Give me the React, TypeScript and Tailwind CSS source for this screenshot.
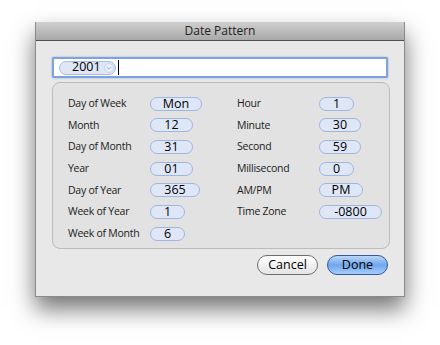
import React from 'react';

const leftRows = [
  { label: 'Day of Week', value: 'Mon', w: 'w-[52px]' },
  { label: 'Month', value: '12', w: 'w-[43px]' },
  { label: 'Day of Month', value: '31', w: 'w-[43px]' },
  { label: 'Year', value: '01', w: 'w-[43px]' },
  { label: 'Day of Year', value: '365', w: 'w-[50px]' },
  { label: 'Week of Year', value: '1', w: 'w-[35px]' },
  { label: 'Week of Month', value: '6', w: 'w-[35px]' },
];

const rightRows = [
  { label: 'Hour', value: '1', w: 'w-[35px]' },
  { label: 'Minute', value: '30', w: 'w-[42px]' },
  { label: 'Second', value: '59', w: 'w-[42px]' },
  { label: 'Millisecond', value: '0', w: 'w-[35px]' },
  { label: 'AM/PM', value: 'PM', w: 'w-[44px]' },
  { label: 'Time Zone', value: '-0800', w: 'w-[63px]' },
];

const Token: React.FC<{ value: string; w: string }> = ({ value, w }) => (
  <div
    className={`${w} h-[14px] rounded-full border border-[#9fb6e2] bg-[#dfe7f7] flex items-center justify-center text-[12.5px] leading-none text-black`}
  >
    {value}
  </div>
);

const Column: React.FC<{ rows: { label: string; value: string; w: string }[] }> = ({ rows }) => (
  <div className="flex flex-col">
    {rows.map((r) => (
      <div key={r.label} className="h-[21.67px] flex items-center">
        <span className="w-[82px] whitespace-nowrap text-[10.5px] tracking-[-0.25px] font-medium text-[#1a1a1a]">
          {r.label}
        </span>
        <Token value={r.value} w={r.w} />
      </div>
    ))}
  </div>
);

const App: React.FC = () => {
  return (
    <div
      className="w-[440px] h-[345px] bg-white pt-[22px] pl-[35px]"
      style={{ fontFamily: '"Lucida Grande", "Open Sans", sans-serif' }}
    >
      <div className="w-[370px] h-[275px] bg-[#e8e8e8] border border-[#8a8a8a] border-t-0 shadow-[0_12px_22px_rgba(0,0,0,0.55)] flex flex-col">
        <div className="h-[19px] bg-gradient-to-b from-[#d0d0d0] to-[#a8a8a8] border-b border-[#505050] flex items-center justify-center text-[12px] font-medium text-[#222]">
          Date Pattern
        </div>

        <div className="pl-[16px] pt-[16px]">
          <div className="w-[336px] h-[21px] rounded-[2px] border-[2px] border-[#7da2dc] shadow-[0_0_2px_#7da2dc] bg-white flex items-center pl-[5px]">
            <div className="h-[14px] w-[57px] rounded-full border border-[#a8bde4] bg-[#dfe7f7] flex items-center pl-[12px] gap-[3px] text-[12.5px] leading-none text-black">
              <span>2001</span>
              <svg width="10" height="10" viewBox="0 0 10 10">
                <circle cx="5" cy="5" r="4.5" fill="#e8eefa" stroke="#c2d0ec" strokeWidth="0.8" />
                <path d="M2.8 4 L5 6.2 L7.2 4" fill="none" stroke="#a0b2d6" strokeWidth="0.9" />
              </svg>
            </div>
            <div className="ml-[2px] w-px h-[15px] bg-black" />
          </div>

          <div className="mt-[4px] w-[338px] h-[167px] rounded-[8px] border border-[#bcbcbc] bg-[#e2e2e2] pl-[15px] pt-[10px] flex">
            <div className="w-[169px]">
              <Column rows={leftRows} />
            </div>
            <Column rows={rightRows} />
          </div>

          <div className="w-[338px] flex justify-end gap-[9px] pr-[2px] mt-[6px]">
            <button className="w-[61px] h-[20px] rounded-full border border-[#6e6e6e] bg-gradient-to-b from-white to-[#e4e4e4] text-[12.5px] text-black leading-none">
              Cancel
            </button>
            <button className="w-[61px] h-[20px] rounded-full border border-[#34599c] bg-gradient-to-b from-[#bcd6f8] via-[#6fa6ec] to-[#a4cefa] text-[12.5px] text-black leading-none">
              Done
            </button>
          </div>
        </div>
      </div>
    </div>
  );
};

export default App;
